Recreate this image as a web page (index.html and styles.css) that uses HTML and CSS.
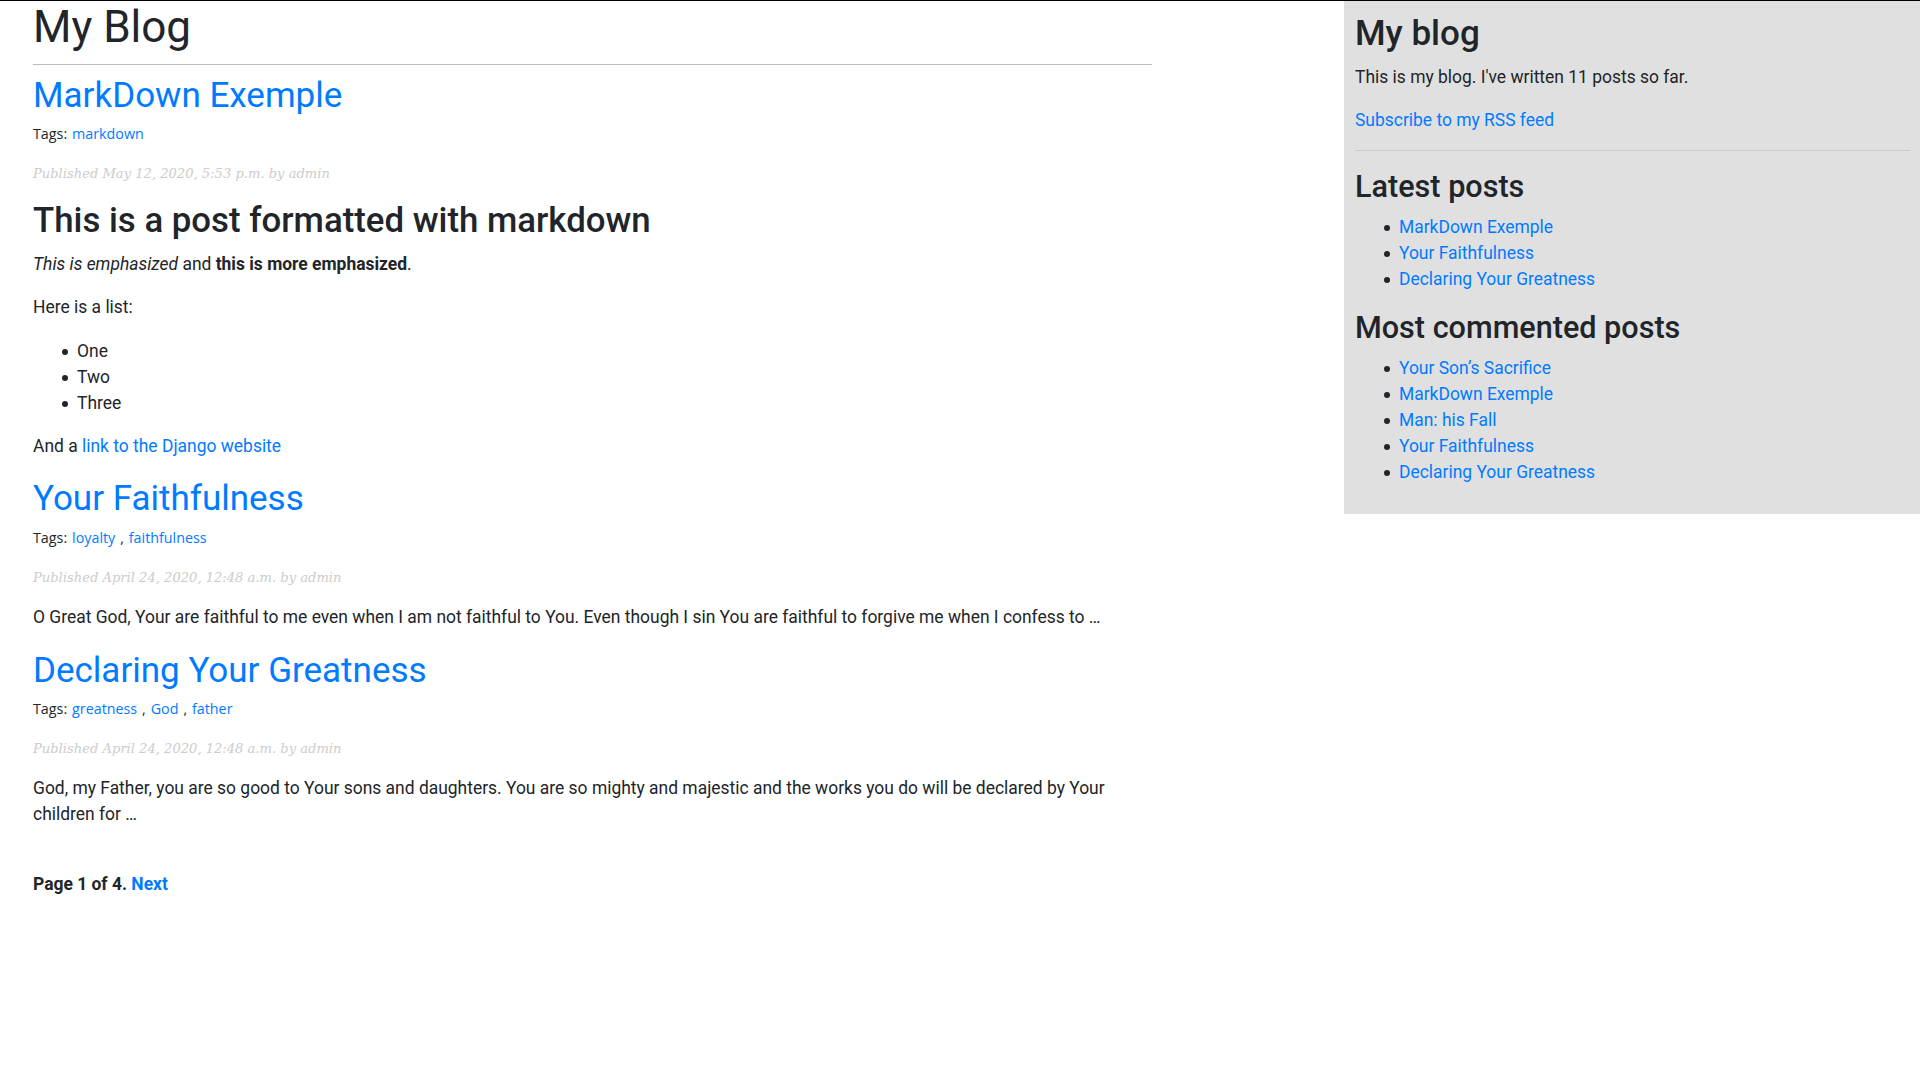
FILE: index.html
```html
<!DOCTYPE html>
<html lang="en">
<head>
<meta charset="utf-8">
<title>My Blog</title>
<link rel="stylesheet" href="styles.css">
</head>
<body>
<div class="page">
  <main class="content">
    <h1 class="site-title">My Blog</h1>

    <article class="post">
      <h2 class="post-title"><a href="#">MarkDown Exemple</a></h2>
      <p class="tags">Tags: <a href="#">markdown</a></p>
      <p class="date">Published May 12, 2020, 5:53 p.m. by admin</p>
      <h2 class="md-heading">This is a post formatted with markdown</h2>
      <p><em>This is emphasized</em> and <strong>this is more emphasized</strong>.</p>
      <p>Here is a list:</p>
      <ul class="bullets">
        <li>One</li>
        <li>Two</li>
        <li>Three</li>
      </ul>
      <p>And a <a href="#">link to the Django website</a></p>
    </article>

    <article class="post">
      <h2 class="post-title"><a href="#">Your Faithfulness</a></h2>
      <p class="tags">Tags: <a href="#">loyalty</a> , <a href="#">faithfulness</a></p>
      <p class="date">Published April 24, 2020, 12:48 a.m. by admin</p>
      <p>O Great God, Your are faithful to me even when I am not faithful to You. Even though I sin You are faithful to forgive me when I confess to …</p>
    </article>

    <article class="post">
      <h2 class="post-title"><a href="#">Declaring Your Greatness</a></h2>
      <p class="tags">Tags: <a href="#">greatness</a> , <a href="#">God</a> , <a href="#">father</a></p>
      <p class="date">Published April 24, 2020, 12:48 a.m. by admin</p>
      <p>God, my Father, you are so good to Your sons and daughters. You are so mighty and majestic and the works you do will be declared by Your children for …</p>
    </article>

    <div class="pagination">
      <span class="current">Page 1 of 4.</span>
      <a href="#">Next</a>
    </div>
  </main>

  <aside class="sidebar">
    <h2 class="side-title">My blog</h2>
    <p>This is my blog. I've written 11 posts so far.</p>
    <p><a href="#">Subscribe to my RSS feed</a></p>
    <hr class="side-rule">
    <h3 class="side-heading">Latest posts</h3>
    <ul class="bullets">
      <li><a href="#">MarkDown Exemple</a></li>
      <li><a href="#">Your Faithfulness</a></li>
      <li><a href="#">Declaring Your Greatness</a></li>
    </ul>
    <h3 class="side-heading">Most commented posts</h3>
    <ul class="bullets">
      <li><a href="#">Your Son’s Sacrifice</a></li>
      <li><a href="#">MarkDown Exemple</a></li>
      <li><a href="#">Man: his Fall</a></li>
      <li><a href="#">Your Faithfulness</a></li>
      <li><a href="#">Declaring Your Greatness</a></li>
    </ul>
  </aside>
</div>
</body>
</html>
```

FILE: styles.css
```css
html, body {
  margin: 0;
  padding: 0;
}

body {
  border-top: 1px solid #000;
  background: #fff;
  color: #212529;
  font-family: Roboto, "Noto Sans", "Liberation Sans", sans-serif;
  font-size: 17.45px;
  line-height: 26px;
}

a {
  color: #007bff;
  text-decoration: none;
}

p {
  margin: 0 0 17.4px;
}

ul {
  margin: 0 0 17.4px;
  padding-left: 44px;
}

strong {
  font-weight: 700;
}

.bullets {
  list-style: none;
}

.bullets li {
  position: relative;
}

.bullets li::before {
  content: "";
  position: absolute;
  left: -15px;
  top: 11px;
  width: 6px;
  height: 6px;
  border-radius: 50%;
  background: #212529;
}

.page {
  display: flex;
  justify-content: space-between;
  align-items: flex-start;
}

.content {
  box-sizing: border-box;
  width: 1152px;
  padding-left: 33px;
}

.site-title {
  margin: 0 0 10px;
  padding-bottom: 10px;
  border-bottom: 1px solid #bbb;
  font-size: 44px;
  font-weight: 400;
  line-height: 1.2;
}

.post + .post {
  margin-top: 19.4px;
}

.post-title {
  margin: 0 0 8.7px;
  font-size: 35px;
  font-weight: 400;
  line-height: 1.2;
}

.md-heading {
  margin: 0 0 8.7px;
  font-size: 34.8px;
  font-weight: 500;
  line-height: 1.2;
}

.tags {
  margin-bottom: 21px;
  font-family: "Open Sans", "Noto Sans", sans-serif;
  font-size: 14.3px;
  line-height: 18px;
  word-spacing: 1.2px;
}

.date {
  margin-bottom: 16.2px;
  color: #ccc;
  font-family: "DejaVu Serif", "Liberation Serif", serif;
  font-style: italic;
  font-size: 13.1px;
  line-height: 19.8px;
}

.pagination {
  margin: 43.5px 0;
  font-weight: 700;
}

.sidebar {
  box-sizing: border-box;
  width: 576px;
  padding: 12px 10px 12px 11px;
  background: #e0e0e0;
}

.side-title {
  margin: 0 0 8.7px;
  font-size: 35px;
  font-weight: 500;
  line-height: 1.2;
}

.side-rule {
  margin: 17.4px 0;
  border: 0;
  border-top: 1px solid #c9c9c9;
}

.side-heading {
  margin: 0 0 8.7px;
  font-size: 30.6px;
  font-weight: 500;
  line-height: 1.2;
}
```
